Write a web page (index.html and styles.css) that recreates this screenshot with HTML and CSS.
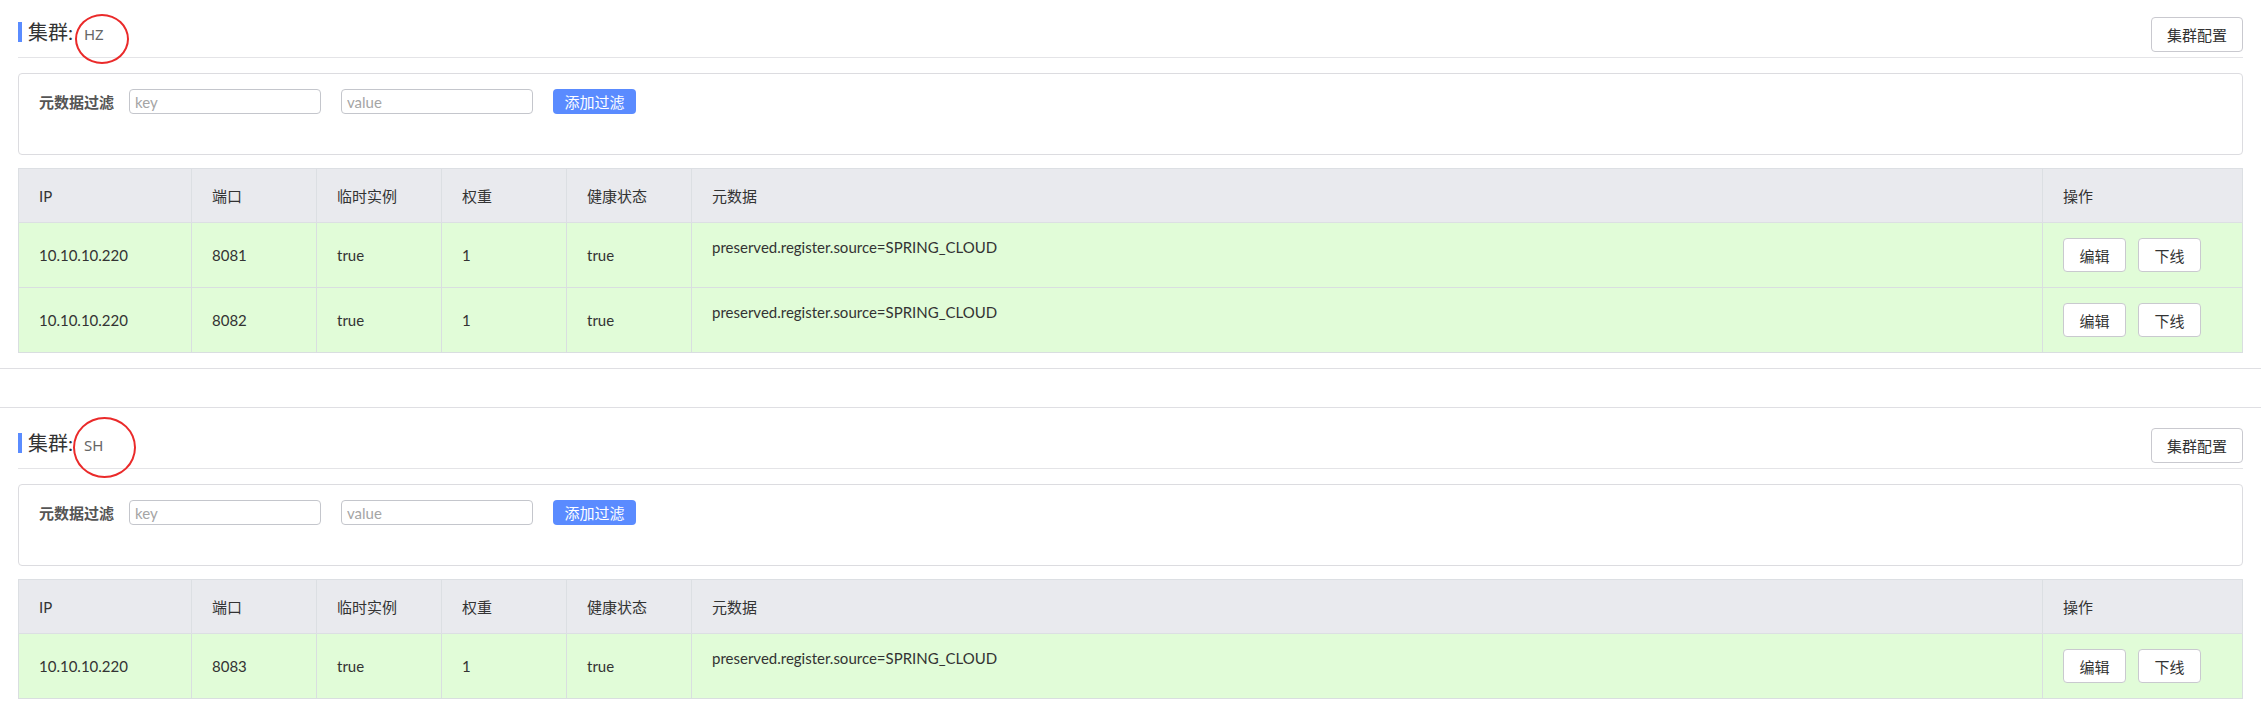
FILE: index.html
```html
<!DOCTYPE html>
<html lang="zh-CN">
<head>
<meta charset="utf-8">
<title>集群</title>
<link rel="stylesheet" href="styles.css">
</head>
<body>
<div class="cluster">
  <div class="cluster-head">
    <div class="title"><span class="title-text">集群:</span><span class="title-name">HZ</span></div>
    <button class="btn btn-config">集群配置</button>
    <span class="mark mark-hz"></span>
  </div>
  <div class="filter">
    <span class="filter-label">元数据过滤</span>
    <input class="input" placeholder="key">
    <input class="input" placeholder="value">
    <button class="btn-primary">添加过滤</button>
  </div>
  <table class="grid">
    <colgroup>
      <col class="c-ip"><col class="c-mid"><col class="c-mid"><col class="c-mid"><col class="c-mid"><col><col class="c-op">
    </colgroup>
    <thead>
      <tr><th>IP</th><th>端口</th><th>临时实例</th><th>权重</th><th>健康状态</th><th>元数据</th><th>操作</th></tr>
    </thead>
    <tbody>
      <tr><td>10.10.10.220</td><td>8081</td><td>true</td><td>1</td><td>true</td><td class="meta">preserved.register.source=SPRING_CLOUD</td><td><div class="ops"><button class="btn btn-op">编辑</button><button class="btn btn-op">下线</button></div></td></tr>
      <tr><td>10.10.10.220</td><td>8082</td><td>true</td><td>1</td><td>true</td><td class="meta">preserved.register.source=SPRING_CLOUD</td><td><div class="ops"><button class="btn btn-op">编辑</button><button class="btn btn-op">下线</button></div></td></tr>
    </tbody>
  </table>
</div>
<div class="cluster">
  <div class="cluster-head">
    <div class="title"><span class="title-text">集群:</span><span class="title-name">SH</span></div>
    <button class="btn btn-config">集群配置</button>
    <span class="mark mark-sh"></span>
  </div>
  <div class="filter">
    <span class="filter-label">元数据过滤</span>
    <input class="input" placeholder="key">
    <input class="input" placeholder="value">
    <button class="btn-primary">添加过滤</button>
  </div>
  <table class="grid">
    <colgroup>
      <col class="c-ip"><col class="c-mid"><col class="c-mid"><col class="c-mid"><col class="c-mid"><col><col class="c-op">
    </colgroup>
    <thead>
      <tr><th>IP</th><th>端口</th><th>临时实例</th><th>权重</th><th>健康状态</th><th>元数据</th><th>操作</th></tr>
    </thead>
    <tbody>
      <tr><td>10.10.10.220</td><td>8083</td><td>true</td><td>1</td><td>true</td><td class="meta">preserved.register.source=SPRING_CLOUD</td><td><div class="ops"><button class="btn btn-op">编辑</button><button class="btn btn-op">下线</button></div></td></tr>
    </tbody>
  </table>
</div>
</body>
</html>
```
FILE: styles.css
```css
* { box-sizing: border-box; }
html, body { margin: 0; padding: 0; background: #fff; }
body {
  font-family: Lato, "Noto Sans CJK SC", sans-serif;
  font-size: 15px;
  color: #333;
  overflow: hidden;
}
.cluster {
  padding: 17px 18px 15px;
  border-bottom: 1px solid #dfdfe3;
}
.cluster + .cluster {
  margin-top: 38px;
  border-top: 1px solid #dfdfe3;
  padding-top: 20px;
}
.cluster-head {
  position: relative;
  display: flex;
  justify-content: space-between;
  align-items: flex-start;
  padding-bottom: 5px;
  border-bottom: 1px solid #e4e4e7;
}
.title {
  display: flex;
  align-items: center;
  height: 20px;
  margin-top: 5px;
  border-left: 4px solid #5a8cff;
  padding-left: 6px;
}
.title-text {
  font-size: 20px;
  line-height: 20px;
  color: #333;
}
.title-name {
  font-family: "Noto Sans", sans-serif;
  font-size: 15px;
  color: #666;
  margin-left: 11px;
  margin-top: 3px;
}
.btn {
  font-family: Lato, "Noto Sans CJK SC", sans-serif;
  font-size: 15px;
  color: #333;
  background: #fff;
  border: 1px solid #c9c9cf;
  border-radius: 4px;
  cursor: pointer;
}
.btn-config {
  height: 35px;
  width: 92px;
  padding: 0;
}
.mark {
  position: absolute;
  border: 2.5px solid #ea2a2a;
  border-radius: 50%;
}
.mark-hz { left: 57px; top: -3px; width: 54px; height: 50px; }
.mark-sh { left: 55px; top: -11px; width: 63px; height: 61px; }
.filter {
  margin-top: 15px;
  display: flex;
  align-items: center;
  border: 1px solid #dcdce0;
  border-radius: 4px;
  padding: 15px 20px 40px;
}
.filter-label {
  font-weight: bold;
  color: #555;
  margin-right: 15px;
}
.input {
  width: 192px;
  height: 25px;
  border: 1px solid #c4c6cc;
  border-radius: 4px;
  padding: 0 5px;
  font-family: Lato, "Noto Sans CJK SC", sans-serif;
  font-size: 15px;
  color: #333;
  margin-right: 20px;
  outline: none;
}
.input::placeholder { color: #a5a5a5; }
.btn-primary {
  height: 25px;
  width: 83px;
  padding: 0;
  border: none;
  border-radius: 4px;
  background: #5a8bff;
  color: #fff;
  font-family: Lato, "Noto Sans CJK SC", sans-serif;
  font-size: 15px;
}
.grid {
  margin-top: 13px;
  width: 100%;
  border-collapse: collapse;
  table-layout: fixed;
  border: 1px solid #dcdfe3;
}
.c-ip { width: 173px; }
.c-mid { width: 125px; }
.c-op { width: 200px; }
.grid th {
  height: 54px;
  background: #e9eaee;
  font-weight: normal;
  text-align: left;
  color: #333;
  padding: 0 20px;
  border: 1px solid #dcdfe3;
}
.grid td {
  height: 65px;
  background: #e1fcd8;
  padding: 0 20px;
  border: 1px solid #d9dee0;
  color: #333;
}
.grid td.meta {
  vertical-align: top;
  padding-top: 14px;
  line-height: 20px;
}
.ops {
  display: flex;
  gap: 12px;
}
.btn-op {
  width: 63px;
  height: 34px;
  padding: 0;
}
```
